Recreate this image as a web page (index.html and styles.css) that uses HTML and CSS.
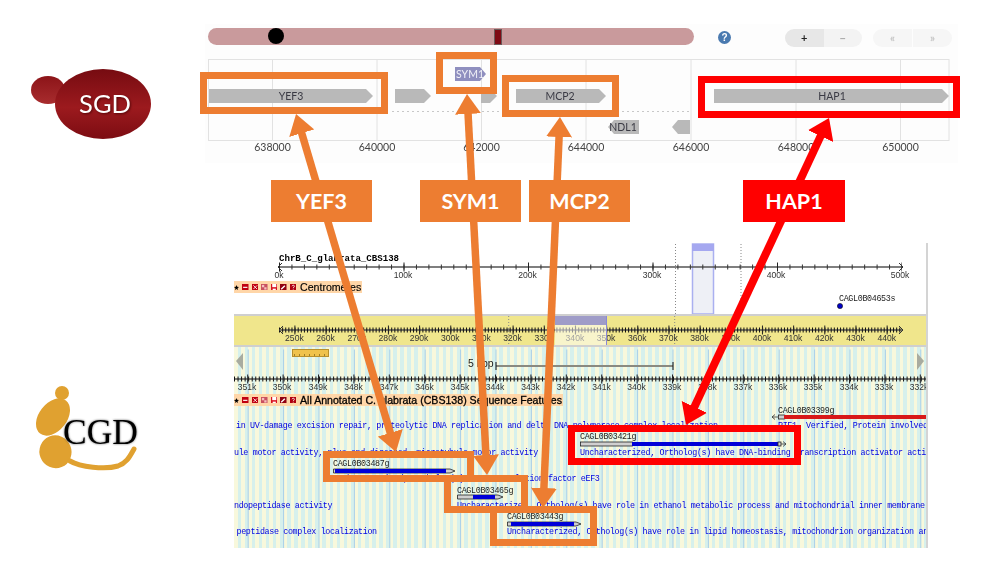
FILE: index.html
```html
<!DOCTYPE html>
<html lang="en">
<head>
<meta charset="utf-8">
<title>SGD and CGD genome browser synteny</title>
<link rel="stylesheet" href="styles.css">
</head>
<body>
<main class="figure">

  <svg class="logo logo-sgd" viewBox="30 68 122 72" aria-label="SGD logo">
    <defs>
      <linearGradient id="sgdBody" x1="0" y1="0" x2="0" y2="1">
        <stop offset="0" stop-color="#760b11"/>
        <stop offset=".55" stop-color="#9c1a1e"/>
        <stop offset="1" stop-color="#7c0c12"/>
      </linearGradient>
      <linearGradient id="sgdBud" x1="0" y1="0" x2="0" y2="1">
        <stop offset="0" stop-color="#8c1418"/>
        <stop offset="1" stop-color="#a82c2e"/>
      </linearGradient>
    </defs>
    <ellipse cx="48" cy="90" rx="17" ry="14" fill="url(#sgdBud)"/>
    <ellipse cx="103" cy="104" rx="48" ry="35" fill="url(#sgdBody)"/>
    <text class="logo-sgd-text" x="105" y="113" text-anchor="middle">SGD</text>
  </svg>

  <section class="sgd-panel">
    <div class="sgd-controls">
      <div class="chrom-slider"><span class="centromere"></span><span class="window-mark"></span></div>
      <div class="help-icon">?</div>
      <div class="btn-group">
        <span class="btn btn-on">+</span><span class="btn btn-off">−</span>
      </div>
      <div class="btn-group btn-group-pan">
        <span class="btn btn-pale">«</span><span class="btn btn-pale">»</span>
      </div>
    </div>
    <svg class="sgd-track" viewBox="205 59 753 104">
      <g class="grid">
        <rect x="208.5" y="59.5" width="740.5" height="81"/>
        <line x1="272.5" x2="272.5" y1="59" y2="140"/>
        <line x1="377" x2="377" y1="59" y2="140"/>
        <line x1="481.5" x2="481.5" y1="59" y2="140"/>
        <line x1="586" x2="586" y1="59" y2="140"/>
        <line x1="691" x2="691" y1="59" y2="140"/>
        <line x1="796" x2="796" y1="59" y2="140"/>
        <line x1="900.5" x2="900.5" y1="59" y2="140"/>
      </g>
      <line class="intergenic" x1="392" x2="692" y1="111.5" y2="111.5"/>
      <polygon class="gene" points="209,89 366,89 373,96 366,103 209,103"/>
      <polygon class="gene" points="395,89 424,89 431,96 424,103 395,103"/>
      <polygon class="gene" points="481,89 490,89 497,96 490,103 481,103"/>
      <polygon class="gene" points="516,89 599,89 606,96 599,103 516,103"/>
      <polygon class="gene" points="714,89 942,89 949,96 942,103 714,103"/>
      <polygon class="gene" points="614,120 639,120 639,134 614,134 608,127"/>
      <polygon class="gene" points="678,120 690,120 690,134 678,134 672,127"/>
      <polygon class="gene gene-rna" points="455,67 480,67 486,74 480,81 455,81"/>
      <text class="gene-name" x="291" y="100">YEF3</text>
      <text class="gene-name" x="560" y="100">MCP2</text>
      <text class="gene-name" x="832" y="100">HAP1</text>
      <text class="gene-name" x="623" y="131">NDL1</text>
      <text class="gene-name gene-name-rna" x="470" y="78">SYM1</text>
      <g class="axis-label">
        <text x="272.5" y="150.5">638000</text>
        <text x="377" y="150.5">640000</text>
        <text x="481.5" y="150.5">642000</text>
        <text x="586" y="150.5">644000</text>
        <text x="691" y="150.5">646000</text>
        <text x="796" y="150.5">648000</text>
        <text x="900.5" y="150.5">650000</text>
      </g>
    </svg>
  </section>

  <svg class="logo logo-cgd" viewBox="30 382 112 94" aria-label="CGD logo">
    <g class="cgd-gold">
      <circle cx="62" cy="393" r="7"/>
      <ellipse cx="53" cy="417" rx="14" ry="21" transform="rotate(38 53 417)"/>
      <ellipse cx="55.5" cy="452" rx="16" ry="16.5" transform="rotate(-22 55 452)"/>
      <path class="cgd-tail" d="M70 461 C80 467 105 470 118 466 C127 463 130 456 134 449"/>
    </g>
    <text class="logo-cgd-text" x="63" y="444">CGD</text>
  </svg>

  <section class="cgd-panel">
    <div class="overview">
      <svg class="panel-art" viewBox="234 243 692 71">
        <rect class="hl-box" x="692.5" y="244" width="21" height="70"/>
        <rect class="hl-top" x="692" y="244" width="22" height="7"/>
        <line class="dotted" x1="675.5" x2="675.5" y1="244" y2="314"/>
        <line class="dotted" x1="741" x2="741" y1="244" y2="314"/>
        <text class="chrom-title" x="279" y="261">ChrB_C_glabrata_CBS138</text>
        <line class="rule" x1="279" x2="902" y1="267" y2="267"/>
        <line class="ticks-minor" x1="279" x2="902" y1="267" y2="267" stroke-dasharray="1 11.45"/>
        <line class="ticks-major" x1="279" x2="902" y1="267" y2="267" stroke-dasharray="1 123.5"/>
        <path class="chev" d="M282 263 L278 267 L282 271 M899 263 L903 267 L899 271"/>
        <g class="ruler-label">
          <text x="279" y="278">0k</text><text x="403" y="278">100k</text><text x="527.5" y="278">200k</text>
          <text x="652" y="278">300k</text><text x="776" y="278">400k</text><text x="900" y="278">500k</text>
        </g>
        <text class="feature-label" x="839" y="301">CAGL0B04653s</text>
        <circle class="cen-dot" cx="840" cy="306" r="2.6"/>
      </svg>
      <div class="track-head track-head-cen">
        <svg class="tool tool-star" viewBox="0 0 7 7"><path d="M3.5 0 L4.5 2.5 L7 2.7 L5 4.4 L5.7 7 L3.5 5.6 L1.3 7 L2 4.4 L0 2.7 L2.5 2.5Z"/></svg>
        <svg class="tool" viewBox="0 0 7 7"><rect width="7" height="7" fill="#c00010"/><rect x="1.2" y="3" width="4.6" height="1.2" fill="#fff"/></svg>
        <svg class="tool" viewBox="0 0 7 7"><rect width="7" height="7" fill="#c00010"/><path d="M1.5 1.5 L5.5 5.5 M5.5 1.5 L1.5 5.5" stroke="#fff" stroke-width=".9"/></svg>
        <svg class="tool" viewBox="0 0 7 7"><rect width="7" height="7" fill="#c85060"/><rect x="1" y="1" width="2.5" height="2.5" fill="#f5c0c0"/><rect x="3.5" y="3.5" width="2.5" height="2.5" fill="#f5c0c0"/></svg>
        <svg class="tool" viewBox="0 0 7 7"><rect width="7" height="7" fill="#d81020"/><rect x="1.3" y="0" width="4.4" height="3.4" fill="#fff"/><rect x="1.8" y="5" width="3.4" height="2" fill="#fff"/></svg>
        <svg class="tool" viewBox="0 0 7 7"><rect width="7" height="7" fill="#900010"/><path d="M1.3 5.7 L5.2 1.8" stroke="#fff" stroke-width="1.4"/></svg>
        <svg class="tool" viewBox="0 0 7 7"><rect width="7" height="7" fill="#b00010"/><path d="M2.2 2.4 C2.4 1 4.8 1 4.8 2.4 C4.8 3.4 3.5 3.2 3.5 4.4 M3.5 5.2 V6" stroke="#fff" stroke-width=".9" fill="none"/></svg>
        <span class="track-name">Centromeres</span>
      </div>
    </div>

    <div class="nav-band">
      <svg class="panel-art" viewBox="234 316 692 29">
        <line class="dotted" x1="508.7" x2="508.7" y1="316" y2="345"/>
        <line class="dotted" x1="674.7" x2="674.7" y1="316" y2="345"/>
        <line class="rule" x1="279" x2="902" y1="330" y2="330"/>
        <line class="ticks-dense" x1="279" x2="902" y1="330" y2="330" stroke-dasharray="1 2.117"/>
        <line class="ticks-major" x1="294.4" x2="902" y1="330" y2="330" stroke-dasharray="1 30.17"/>
        <path class="chev" d="M283 326 L279 330 L283 334 M899 326 L903 330 L899 334"/>
        <g class="ruler-label">
          <text x="294.4" y="341">250k</text><text x="325.6" y="341">260k</text><text x="356.7" y="341">270k</text><text x="387.9" y="341">280k</text>
          <text x="419" y="341">290k</text><text x="450.2" y="341">300k</text><text x="481.4" y="341">310k</text><text x="512.6" y="341">320k</text>
          <text x="543.7" y="341">330k</text><text x="574.9" y="341">340k</text><text x="606" y="341">350k</text><text x="637.3" y="341">360k</text>
          <text x="668.4" y="341">370k</text><text x="699.6" y="341">380k</text><text x="730.8" y="341">390k</text><text x="762" y="341">400k</text>
          <text x="793.1" y="341">410k</text><text x="824.3" y="341">420k</text><text x="855.5" y="341">430k</text><text x="886.7" y="341">440k</text>
        </g>
        <rect class="nav-shade" x="555" y="325" width="52" height="20"/>
        <rect class="nav-top" x="555" y="316" width="52" height="9"/>
        <line class="nav-edge" x1="606.5" x2="606.5" y1="316" y2="345"/>
      </svg>
    </div>

    <div class="detail">
      <svg class="panel-art" viewBox="234 347 692 201">
        <line class="major-lines" x1="247.7" x2="926" y1="450" y2="450" stroke-dasharray="1 34.4"/>
        <polygon class="pan-arrow" points="236,361 243,353 243,370"/>
        <polygon class="pan-arrow" points="917,353 924,361 917,370"/>
        <rect class="mini-scale" x="292.5" y="349.5" width="36" height="7"/>
        <line class="mini-ticks" x1="294" x2="327" y1="355" y2="355" stroke-dasharray="1 4"/>
        <text class="scale-text" x="468" y="367">5 kbp</text>
        <line class="scale-bar" x1="496" x2="673" y1="366" y2="366"/>
        <path class="scale-end" d="M496 362 V370 M673 362 V370"/>
        <line class="rule" x1="234" x2="926" y1="379" y2="379"/>
        <line class="ticks-dense" x1="234" x2="926" y1="379" y2="379" stroke-dasharray="1 2.54"/>
        <line class="ticks-major" x1="247.2" x2="926" y1="379" y2="379" stroke-dasharray="1 34.4"/>
        <g class="ruler-label">
          <text x="247" y="390">351k</text><text x="282" y="390">350k</text><text x="318" y="390">349k</text><text x="353.5" y="390">348k</text>
          <text x="389" y="390">347k</text><text x="424.5" y="390">346k</text><text x="460" y="390">345k</text><text x="495" y="390">344k</text>
          <text x="530.5" y="390">343k</text><text x="566" y="390">342k</text><text x="601.5" y="390">341k</text><text x="636.5" y="390">340k</text>
          <text x="672" y="390">339k</text><text x="707.5" y="390">338k</text><text x="743" y="390">337k</text><text x="778" y="390">336k</text>
          <text x="813" y="390">335k</text><text x="849" y="390">334k</text><text x="884" y="390">333k</text><text x="919" y="390">332k</text>
        </g>

        <g class="desc">
          <text x="236" y="428">in UV-damage excision repair, proteolytic DNA replication and delta DNA polymerase complex localization</text>
          <text x="234" y="454.5">ule motor activity, plus-end-directed, microtubule motor activity</text>
          <text x="333" y="481">Uncharacterized, Ortholog(s) have translation factor eEF3</text>
          <text x="234" y="507.5">ndopeptidase activity</text>
          <text x="236.5" y="534">peptidase complex localization</text>
          <text x="778" y="428">RIF1, Verified, Protein involved</text>
          <text x="580" y="454.5">Uncharacterized, Ortholog(s) have DNA-binding transcription activator acti</text>
          <text x="457" y="507.5">Uncharacterized, Ortholog(s) have role in ethanol metabolic process and mitochondrial inner membrane</text>
          <text x="507" y="534">Uncharacterized, Ortholog(s) have role in lipid homeostasis, mitochondrion organization an</text>
        </g>
        <g class="feature-label">
          <text x="778" y="413">CAGL0B03399g</text>
          <text x="580" y="439">CAGL0B03421g</text>
          <text x="333" y="466">CAGL0B03487g</text>
          <text x="457" y="492.5">CAGL0B03465g</text>
          <text x="507" y="519">CAGL0B03443g</text>
        </g>

        <path class="strand" d="M778 417 H772 M775 414.5 L772 417 L775 419.5"/>
        <rect class="utr" x="778.5" y="415" width="6" height="4"/>
        <rect class="cds cds-red" x="784" y="415" width="142" height="4"/>

        <rect class="utr" x="580.5" y="442" width="52" height="4"/>
        <rect class="cds" x="632" y="442" width="146" height="4"/>
        <rect class="utr" x="778" y="442" width="3" height="4"/>
        <path class="strand" d="M781 444 H786 M783 441.5 L786 444 L783 446.5"/>

        <polygon class="utr" points="333.5,469 450,469 455,471 450,473 333.5,473"/>
        <rect class="cds" x="335" y="469" width="111" height="4"/>

        <polygon class="utr" points="457.5,495 498,495 503,497 498,499 457.5,499"/>
        <rect class="cds" x="473" y="495" width="22" height="4"/>

        <polygon class="utr" points="507.5,522 576,522 581,524 576,526 507.5,526"/>
        <rect class="cds" x="511" y="522" width="63" height="4"/>
      </svg>
      <div class="track-head track-head-all">
        <svg class="tool tool-star" viewBox="0 0 7 7"><path d="M3.5 0 L4.5 2.5 L7 2.7 L5 4.4 L5.7 7 L3.5 5.6 L1.3 7 L2 4.4 L0 2.7 L2.5 2.5Z"/></svg>
        <svg class="tool" viewBox="0 0 7 7"><rect width="7" height="7" fill="#c00010"/><rect x="1.2" y="3" width="4.6" height="1.2" fill="#fff"/></svg>
        <svg class="tool" viewBox="0 0 7 7"><rect width="7" height="7" fill="#c00010"/><path d="M1.5 1.5 L5.5 5.5 M5.5 1.5 L1.5 5.5" stroke="#fff" stroke-width=".9"/></svg>
        <svg class="tool" viewBox="0 0 7 7"><rect width="7" height="7" fill="#c85060"/><rect x="1" y="1" width="2.5" height="2.5" fill="#f5c0c0"/><rect x="3.5" y="3.5" width="2.5" height="2.5" fill="#f5c0c0"/></svg>
        <svg class="tool" viewBox="0 0 7 7"><rect width="7" height="7" fill="#d81020"/><rect x="1.3" y="0" width="4.4" height="3.4" fill="#fff"/><rect x="1.8" y="5" width="3.4" height="2" fill="#fff"/></svg>
        <svg class="tool" viewBox="0 0 7 7"><rect width="7" height="7" fill="#900010"/><path d="M1.3 5.7 L5.2 1.8" stroke="#fff" stroke-width="1.4"/></svg>
        <svg class="tool" viewBox="0 0 7 7"><rect width="7" height="7" fill="#b00010"/><path d="M2.2 2.4 C2.4 1 4.8 1 4.8 2.4 C4.8 3.4 3.5 3.2 3.5 4.4 M3.5 5.2 V6" stroke="#fff" stroke-width=".9" fill="none"/></svg>
        <span class="track-name track-name-all">All Annotated C. glabrata (CBS138) Sequence Features</span>
      </div>
    </div>
  </section>

  <svg class="annotations" viewBox="0 0 993 568">
    <defs>
      <marker id="headOrange" markerUnits="userSpaceOnUse" markerWidth="22" markerHeight="26" refX="5" refY="13" orient="auto-start-reverse">
        <path d="M0 0 L20 13 L0 26Z" fill="#ed7d31"/>
      </marker>
      <marker id="headRed" markerUnits="userSpaceOnUse" markerWidth="22" markerHeight="28" refX="5" refY="14" orient="auto-start-reverse">
        <path d="M0 0 L20 14 L0 28Z" fill="#ff0000"/>
      </marker>
    </defs>
    <line class="arrow arrow-orange" x1="300.3" y1="128.4" x2="391.7" y2="437.6"/>
    <line class="arrow arrow-orange" x1="467.8" y1="109" x2="486.2" y2="460"/>
    <line class="arrow arrow-orange" x1="559.3" y1="132" x2="543.7" y2="493"/>
    <line class="arrow arrow-red" x1="822.7" y1="131.6" x2="692.3" y2="411.4"/>
    <rect class="mark mark-orange" x="203.5" y="75.5" width="181" height="35"/>
    <rect class="mark mark-orange" x="439.5" y="55.5" width="54" height="35"/>
    <rect class="mark mark-orange" x="505.5" y="78.5" width="110" height="35"/>
    <rect class="mark mark-red" x="701.5" y="79.5" width="255" height="35"/>
    <rect class="mark mark-orange" x="326.5" y="454.5" width="144" height="24"/>
    <rect class="mark mark-orange" x="447.5" y="478.5" width="77" height="31"/>
    <rect class="mark mark-orange" x="493.5" y="509.5" width="100" height="33"/>
    <rect class="mark mark-red" x="571.5" y="428.5" width="226" height="33"/>
  </svg>

  <div class="callout callout-yef3">YEF3</div>
  <div class="callout callout-sym1">SYM1</div>
  <div class="callout callout-mcp2">MCP2</div>
  <div class="callout callout-hap1">HAP1</div>
</main>
</body>
</html>
```
FILE: styles.css
```css
* { box-sizing: border-box; }
html, body { margin: 0; background: #fff; }
.figure { position: relative; width: 993px; height: 568px; overflow: hidden; font-family: "Liberation Sans", sans-serif; }

/* logos */
.logo { position: absolute; display: block; }
.logo-sgd { left: 30px; top: 68px; width: 122px; height: 72px; filter: blur(.3px); }
.logo-sgd-text { font: 400 25.5px "Lato", sans-serif; fill: #fff; filter: drop-shadow(1px 1px 1px rgba(60,0,0,.7)); }
.logo-cgd { left: 30px; top: 382px; width: 112px; height: 94px; filter: blur(.3px); }
.cgd-gold { fill: #e0a130; }
.cgd-tail { fill: none; stroke: #e0a130; stroke-width: 5; stroke-linecap: round; }
.logo-cgd-text { font: 400 35.5px "Liberation Serif", serif; fill: #000; filter: drop-shadow(0 0 1px rgba(0,0,0,.6)); }

/* SGD panel */
.sgd-panel { position: absolute; left: 205px; top: 24px; width: 753px; height: 139px; background: #fdfdfd; display: flex; flex-direction: column; filter: blur(.35px); }
.sgd-controls { display: flex; height: 35px; padding: 4px 0 0 3px; align-items: flex-start; }
.chrom-slider { position: relative; width: 486px; height: 17px; border-radius: 9px; background: #c99a9c; flex: none; }
.centromere { position: absolute; left: 60px; top: 0; width: 16px; height: 16px; border-radius: 50%; background: #000; }
.window-mark { position: absolute; left: 286px; top: 1px; width: 8px; height: 16px; background: #7f0a14; border: 1px solid #6a5a5a; }
.help-icon { width: 13px; height: 13px; margin: 3px 0 0 24px; border-radius: 50%; background: #4a7ab0; color: #fff; font: 700 10px/13px "Liberation Sans", sans-serif; text-align: center; flex: none; }
.btn-group { display: flex; margin: 1px 0 0 54px; border-radius: 9px; overflow: hidden; flex: none; }
.btn-group-pan { margin-left: 11px; gap: 1px; }
.btn { display: block; width: 38.5px; height: 18px; text-align: center; font: 700 11px/17px "Lato", sans-serif; }
.btn-on { background: #e7e7e7; color: #222; }
.btn-off { background: #f3f3f3; color: #aaa; }
.btn-pale { background: #f6f6f6; color: #c4c4c4; width: 39px; }
.sgd-track { display: block; width: 753px; height: 104px; flex: none; }
.grid rect, .grid line { fill: none; stroke: #e2e2e2; stroke-width: 1; }
.intergenic { stroke: #c8c8c8; stroke-dasharray: 2 3; stroke-width: 1; }
.gene { fill: #b9b9b9; }
.gene-rna { fill: #8f8fbf; }
.gene-name { font: 400 10.5px "Lato", sans-serif; fill: #3a3a44; text-anchor: middle; }
.gene-name-rna { fill: #f2f2f8; }
.axis-label text { font: 400 10.5px "Lato", sans-serif; fill: #444; text-anchor: middle; }

/* CGD panel */
.cgd-panel { position: absolute; left: 234px; top: 243px; width: 694px; height: 305px; border-right: 2px solid #d4d4d4; display: flex; flex-direction: column; filter: blur(.3px); }
.panel-art { position: absolute; inset: 0; display: block; width: 100%; height: 100%; }
.overview { position: relative; height: 71px; background: #fff; flex: none; padding-top: 38px; }
.nav-band { position: relative; height: 33px; flex: none; background: #f0e68c; border-top: 2px solid #cfcfcf; border-bottom: 2px solid #cfcfcf; }
.detail { position: relative; height: 201px; flex: none; padding-top: 47px; background: repeating-linear-gradient(90deg, #f8f8dc 0 3.5px, #d6f0ec 3.5px 7.08px); }
.track-head { position: relative; display: flex; width: max-content; height: 12px; gap: 3px; align-items: center; background: #ffd6a8; padding-right: 1px; }
.tool { display: block; width: 6.5px; height: 6.5px; flex: none; }
.tool-star { fill: #000; width: 5px; height: 5px; }
.track-name { font-size: 10.6px; line-height: 12px; color: #000; margin-left: 1px; -webkit-text-stroke: .15px #000; }
.track-name-all { -webkit-text-stroke: .3px #000; }
.hl-box { fill: #eef0f6; stroke: #aab0f0; stroke-width: 1.5; }
.hl-top { fill: #a5a8f0; }
.dotted { stroke: #888; stroke-width: 1; stroke-dasharray: 1 2; }
.chrom-title { font: 700 9.1px "Liberation Mono", monospace; fill: #000; }
.rule { stroke: #555; stroke-width: 1.4; }
.ticks-minor { stroke: #333; stroke-width: 5; }
.ticks-major { stroke: #222; stroke-width: 9; }
.ticks-dense { stroke: #111; stroke-width: 5; }
.chev { fill: none; stroke: #333; stroke-width: 1; }
.ruler-label text { font: 400 8.6px "Liberation Sans", sans-serif; fill: #333; text-anchor: middle; }
.feature-label, .feature-label text { font: 400 8.4px "Liberation Mono", monospace; letter-spacing: -.35px; fill: #222; }
.cen-dot { fill: #0000c8; stroke: #111; stroke-width: .6; }
.nav-shade { fill: #fff; fill-opacity: .55; }
.nav-top { fill: #9f9cc8; }
.nav-edge { stroke: #8a88d8; stroke-width: 1; }
.major-lines { stroke: #a9cfe8; stroke-width: 201; }
.pan-arrow { fill: #a8aca0; }
.mini-scale { fill: #f0c24c; stroke: #b8902c; stroke-width: 1; }
.mini-ticks { stroke: #a07e28; stroke-width: 2; }
.scale-text { font: 400 10.5px "Liberation Sans", sans-serif; fill: #222; }
.scale-bar { stroke: #8a8a80; stroke-width: 2; }
.scale-end { stroke: #111; stroke-width: 1; fill: none; }
.desc text { font: 400 8.4px "Liberation Mono", monospace; letter-spacing: -.35px; fill: #0000e0; }
.strand { fill: none; stroke: #333; stroke-width: .8; }
.utr { fill: #d0d0d0; stroke: #222; stroke-width: .8; }
.cds { fill: #0000d8; }
.cds-red { fill: #d81818; }

/* annotation layer over the two browsers */
.annotations { position: absolute; inset: 0; width: 993px; height: 568px; display: block; }
.arrow { fill: none; stroke-width: 7.5; }
.arrow-orange { stroke: #ed7d31; marker-start: url(#headOrange); marker-end: url(#headOrange); }
.arrow-red { stroke: #ff0000; stroke-width: 8; marker-start: url(#headRed); marker-end: url(#headRed); }
.mark { fill: none; stroke-width: 7; }
.mark-orange { stroke: #ed7d31; }
.mark-red { stroke: #ff0000; }
.callout { position: absolute; top: 180px; width: 101px; height: 42px; color: #fff; font: 700 21.5px/42px "Lato", sans-serif; text-align: center; background: #ed7d31; }
.callout-yef3 { left: 271px; }
.callout-sym1 { left: 420px; }
.callout-mcp2 { left: 529px; }
.callout-hap1 { left: 743px; width: 102px; background: #ff0000; }
```
